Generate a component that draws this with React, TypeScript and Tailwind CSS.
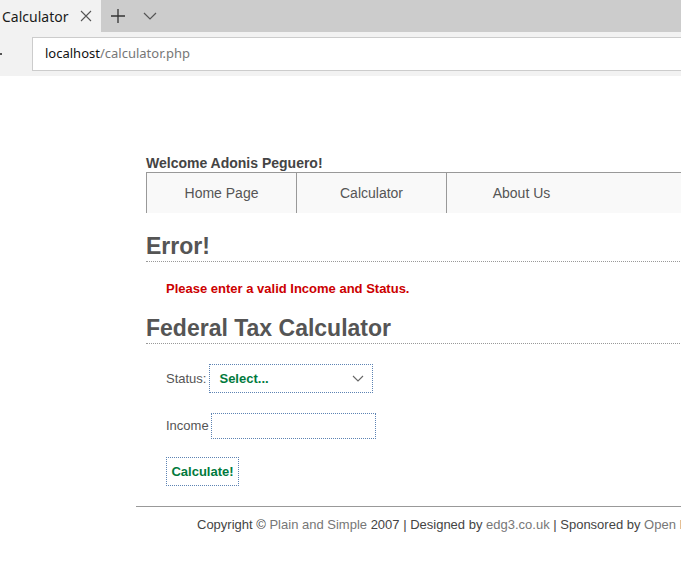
import React from "react";

const navItems = ["Home Page", "Calculator", "About Us"];

function BrowserChrome() {
  return (
    <div className="font-['Noto_Sans',sans-serif]">
      <div className="flex h-[32px] items-center bg-[#cccccc]">
        <div className="flex h-full w-[101px] items-center bg-[#f2f2f2] pl-[2px] text-[14px] text-[#1a1a1a]">
          <span>Calculator</span>
          <svg className="ml-[12px]" width="12" height="12" viewBox="0 0 12 12">
            <path d="M1 1L11 11M11 1L1 11" stroke="#555" strokeWidth="1.1" />
          </svg>
        </div>
        <svg className="ml-[10px]" width="14" height="14" viewBox="0 0 14 14">
          <path d="M7 0V14M0 7H14" stroke="#333" strokeWidth="1.3" />
        </svg>
        <svg className="ml-[18px]" width="14" height="8" viewBox="0 0 14 8">
          <path d="M1 1L7 7L13 1" stroke="#555" strokeWidth="1.2" fill="none" />
        </svg>
      </div>
      <div className="relative flex h-[44px] items-start bg-[#f2f2f2] pt-[5px]">
        <span className="absolute left-0 top-[21px] h-[2px] w-[2px] bg-[#555]" />
        <div className="ml-[32px] flex h-[34px] flex-1 items-center border border-r-0 border-[#cccccc] bg-white pl-[12px] text-[13px]">
          <span className="text-[#111]">localhost</span>
          <span className="text-[#777]">/calculator.php</span>
        </div>
      </div>
    </div>
  );
}

export default function App() {
  return (
    <div className="h-[567px] w-[681px] overflow-hidden bg-white">
      <BrowserChrome />
      <div className="ml-[136px] font-['Liberation_Sans',Arial,sans-serif] text-[#555]">
        <div className="pl-[10px] pt-[79px]">
          <div className="text-[14px] font-bold leading-[17px] text-[#444]">Welcome Adonis Peguero!</div>
          <div className="flex h-[41px] w-[700px] border-t border-[#999] bg-[#f9f9f9]">
            {navItems.map((item) => (
              <div
                key={item}
                className="flex w-[150px] shrink-0 items-center justify-center border-l border-[#999] text-[14px] text-[#555]"
              >
                {item}
              </div>
            ))}
          </div>

          <h2 className="mt-[21px] w-[700px] border-b border-dotted border-[#999] pb-[2px] text-[23px] font-bold leading-[25px] text-[#555]">
            Error!
          </h2>
          <p className="mt-[19px] pl-[20px] text-[13px] font-bold leading-[16px] text-[#cc0000]">
            Please enter a valid Income and Status.
          </p>

          <h2 className="mt-[19px] w-[700px] border-b border-dotted border-[#999] pb-[2px] text-[23px] font-bold leading-[25px] text-[#555]">
            Federal Tax Calculator
          </h2>

          <div className="pl-[20px] pt-[20px] text-[13px]">
            <div className="flex items-center">
              <span className="mr-[3px]">Status:</span>
              <div className="flex h-[29px] w-[164px] items-center justify-between border border-dotted border-[#5d83b3] pl-[9px] pr-[8px]">
                <span className="font-bold text-[#007a3d]">Select...</span>
                <svg width="12" height="7" viewBox="0 0 12 7">
                  <path d="M1 1L6 6L11 1" stroke="#666" strokeWidth="1.1" fill="none" />
                </svg>
              </div>
            </div>
            <div className="mt-[20px] flex items-center">
              <span className="mr-[2px]">Income</span>
              <div className="h-[26px] w-[165px] border border-dotted border-[#5d83b3]" />
            </div>
            <div className="mt-[18px] flex h-[29px] w-[73px] items-center justify-center border border-dotted border-[#5d83b3] font-bold text-[#007a3d]">
              Calculate!
            </div>
          </div>
        </div>

        <div className="mt-[20px] border-t border-[#999] pl-[61px] pt-[8px] text-[13px] whitespace-nowrap text-[#444]">
          Copyright © <span className="text-[#777]">Plain and Simple</span> 2007 | Designed by{" "}
          <span className="text-[#777]">edg3.co.uk</span> | Sponsored by{" "}
          <span className="text-[#777]">Open Designs</span>
        </div>
      </div>
    </div>
  );
}
